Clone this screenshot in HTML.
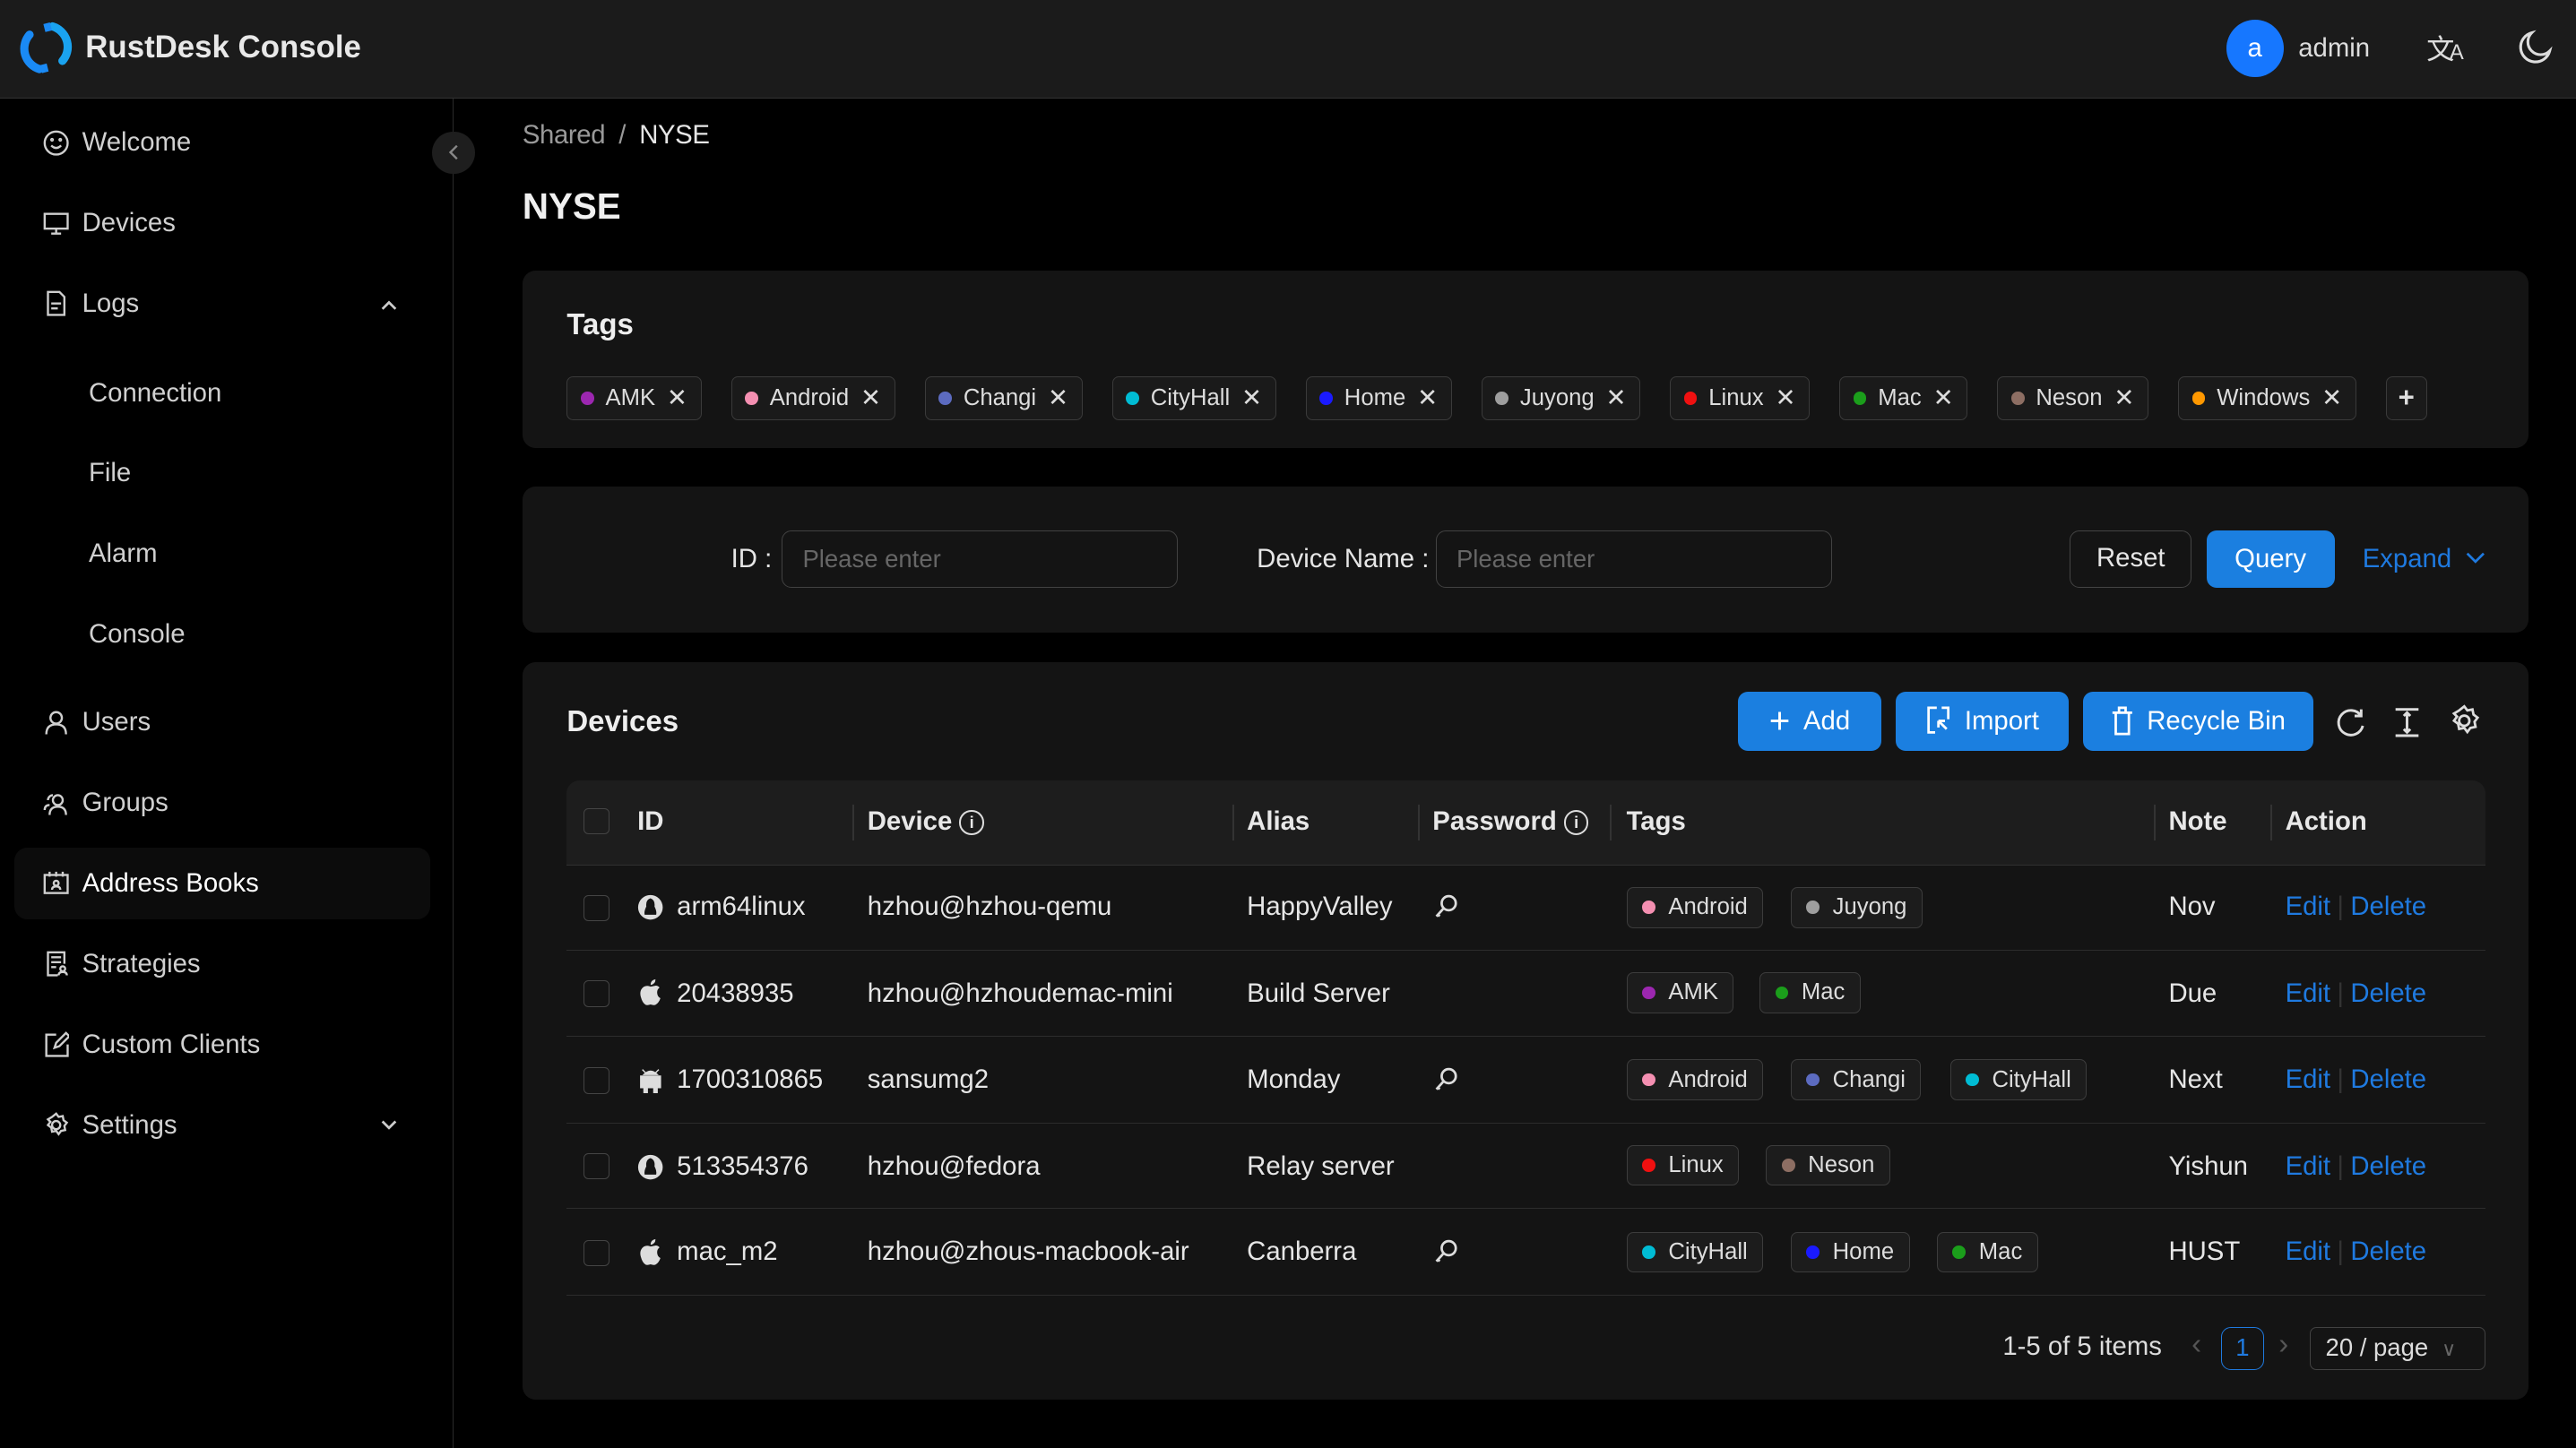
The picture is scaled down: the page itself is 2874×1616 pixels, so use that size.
<!DOCTYPE html>
<html><head><meta charset="utf-8"><style>
*{box-sizing:border-box;margin:0;padding:0}
html,body{width:2874px;height:1616px;overflow:hidden;background:#000}
#w{zoom:1.83291;width:1568px;height:882px;position:relative;font-family:"Liberation Sans",sans-serif;color:#e6e6e6;background:#000}
.a{position:absolute}
.hd{left:0;top:0;width:1568px;height:60px;background:#1b1b1b;border-bottom:1px solid #333}
.sb{left:0;top:60px;width:276px;height:822px;border-right:1px solid #2a2a2a}
.mi{position:absolute;left:26px;font-size:16px;color:#d0d0d0;display:flex;align-items:center;gap:8px;height:20px}
.mi svg{width:16px;height:16px;fill:none;stroke:#cfcfcf;stroke-width:1.3}
.sub{position:absolute;left:54px;font-size:16px;color:#d0d0d0}
.card{background:#141414;border-radius:8px}
.tag{display:inline-flex;align-items:center;height:27px;border:1px solid #3a3a3a;border-radius:4px;background:#1a1a1a;padding:0 8px;font-size:14px;color:#ddd;gap:7px}
.dot{width:8px;height:8px;border-radius:50%;display:inline-block}
.x{font-size:15px;margin-left:0}
.inp{border:1px solid #424242;border-radius:6px;height:35px;width:241px;font-size:15px;color:#666;padding:8px 12px;background:#141414}
.btn{background:#1b7fe0;border-radius:6px;color:#fff;font-size:16px;display:flex;align-items:center;justify-content:center;gap:8px}
.th{font-size:16px;font-weight:bold;color:#e8e8e8}
.sep{position:absolute;top:490px;width:1px;height:22px;background:#333}
.row{position:absolute;left:345px;width:1168px;height:52px;border-bottom:1px solid #2c2c2c}
.cb{position:absolute;left:355px;width:16px;height:16px;border:1px solid #444;border-radius:3px}
.t{position:absolute;font-size:16px;color:#e6e6e6;white-space:nowrap}
.lk{color:#1f7ae0}
.lk b{font-weight:normal;color:#333;margin:0 4px}
.stag{position:absolute;display:inline-flex;align-items:center;height:25px;border:1px solid #3c3c3c;border-radius:4px;background:#1c1c1c;padding:0 9px;font-size:14px;color:#ddd;gap:8px}
.key{position:absolute;left:872px;width:16px;height:16px}
</style></head><body><div id="w">
<div class="a hd"></div>
<svg class="a" style="left:12px;top:13px" width="33" height="32" viewBox="0 0 33 32"><path d="M20 3 A13 13 0 0 1 26 24" stroke="#1aa3f0" stroke-width="5" fill="none" stroke-linecap="round"/><path d="M12 29 A13 13 0 0 1 6 8" stroke="#1a8af5" stroke-width="5" fill="none" stroke-linecap="round"/><path d="M19 3 L15 4 M13 29 L17 28" stroke="#1a8af5" stroke-width="5"/></svg>
<div class="a" style="left:52px;top:18px;font-size:19px;font-weight:bold;color:#e8e8e8">RustDesk Console</div>
<div class="a" style="left:1355px;top:12px;width:35px;height:35px;border-radius:50%;background:#1677ff;color:#fff;font-size:16px;text-align:center;line-height:35px">a</div>
<div class="a" style="left:1399px;top:20px;font-size:16px;color:#ddd">admin</div>
<div class="a" style="left:1477px;top:17px;font-size:17px;color:#ddd;font-family:'Noto Sans CJK SC',sans-serif;line-height:24px">文<span style="font-size:13px;font-family:'Liberation Sans';margin-left:-3px">A</span></div>
<svg class="a" style="left:1532px;top:18px" width="22" height="22" viewBox="0 0 22 22"><path d="M9 2 A9 9 0 1 0 20 13 A7 7 0 0 1 9 2Z" fill="none" stroke="#ddd" stroke-width="1.7"/></svg>

<div class="a sb"></div>
<div class="mi" style="top:77px"><svg viewBox="0 0 16 16"><circle cx="8" cy="8" r="7"/><path d="M5 9.5q3 3 6 0"/><circle cx="5.5" cy="6" r=".5"/><circle cx="10.5" cy="6" r=".5"/></svg>Welcome</div>
<div class="mi" style="top:126px"><svg viewBox="0 0 16 16"><rect x="1" y="2" width="14" height="9"/><path d="M8 11v3M5 14h6"/></svg>Devices</div>
<div class="mi" style="top:175px"><svg viewBox="0 0 16 16"><path d="M3 1h7l3 3v11H3z M5 8h6M5 11h4"/></svg>Logs</div>
<svg class="a" style="left:231px;top:181px" width="12" height="10" viewBox="0 0 12 10"><path d="M2 7l4-4 4 4" stroke="#ccc" stroke-width="1.5" fill="none"/></svg>
<div class="sub" style="top:230px">Connection</div>
<div class="sub" style="top:279px">File</div>
<div class="sub" style="top:328px">Alarm</div>
<div class="sub" style="top:377px">Console</div>
<div class="mi" style="top:430px"><svg viewBox="0 0 16 16"><circle cx="8" cy="5" r="3.5"/><path d="M2 15q0-6 6-6t6 6"/></svg>Users</div>
<div class="mi" style="top:479px"><svg viewBox="0 0 16 16"><circle cx="9" cy="6" r="3"/><path d="M4 15q0-5 5-5t5 5M6 3a3 3 0 0 0-3 3M1 12q0-3 3-3"/></svg>Groups</div>
<div class="a" style="left:9px;top:516px;width:253px;height:44px;background:#0c0c0c;border-radius:8px"></div>
<div class="mi" style="top:528px;color:#fff"><svg viewBox="0 0 16 16"><rect x="1" y="3" width="14" height="11"/><path d="M4 1v3M8 1v3M12 1v3"/><circle cx="8" cy="8" r="1.5"/><path d="M5.5 12q0-2 2.5-2t2.5 2"/></svg>Address Books</div>
<div class="mi" style="top:577px"><svg viewBox="0 0 16 16"><path d="M13 8V1H3v14h6M5 4h6M5 7h6M5 10h3"/><circle cx="12" cy="11" r="1.5"/><path d="M9.5 15q0-2 2.5-2t2.5 2"/></svg>Strategies</div>
<div class="mi" style="top:626px"><svg viewBox="0 0 16 16"><path d="M8 2H2v13h13V8M7 10l1-3 6-6 2 2-6 6z"/></svg>Custom Clients</div>
<div class="mi" style="top:675px"><svg viewBox="0 0 16 16"><circle cx="8" cy="8" r="2.5"/><path d="M8 1l1.5 2 2.5-.5.5 2.5 2 1.5-1.5 2 .5 2.5-2.5.5-1.5 2-1.5-2-2.5.5-.5-2.5-2-1.5 1.5-2L3 4.5 5.5 3z"/></svg>Settings</div>
<svg class="a" style="left:231px;top:680px" width="12" height="10" viewBox="0 0 12 10"><path d="M2 3l4 4 4-4" stroke="#ccc" stroke-width="1.5" fill="none"/></svg>
<div class="a" style="left:263px;top:80px;width:26px;height:26px;border-radius:50%;background:#1e1e1e"></div>
<svg class="a" style="left:271px;top:87px" width="10" height="12" viewBox="0 0 10 12"><path d="M7 2L3 6l4 4" stroke="#888" stroke-width="1.3" fill="none"/></svg>

<div class="a" style="left:318px;top:73px;font-size:16px;color:#999;letter-spacing:-0.2px">Shared <span style="margin:0 4px">/</span> <span style="color:#e6e6e6">NYSE</span></div>
<div class="a" style="left:318px;top:113px;font-size:22px;font-weight:bold;color:#f0f0f0">NYSE</div>

<div class="a card" style="left:318px;top:165px;width:1221px;height:108px"></div>
<div class="a" style="left:345px;top:187px;font-size:18px;font-weight:bold;color:#eee">Tags</div>
<div class="a" style="left:345px;top:229px;display:flex;gap:18px">
<span class="tag"><i class="dot" style="background:#9c27b0"></i>AMK<span class="x">✕</span></span>
<span class="tag"><i class="dot" style="background:#f48fb1"></i>Android<span class="x">✕</span></span>
<span class="tag"><i class="dot" style="background:#5c6bc0"></i>Changi<span class="x">✕</span></span>
<span class="tag"><i class="dot" style="background:#00bcd4"></i>CityHall<span class="x">✕</span></span>
<span class="tag"><i class="dot" style="background:#1a1aff"></i>Home<span class="x">✕</span></span>
<span class="tag"><i class="dot" style="background:#9e9e9e"></i>Juyong<span class="x">✕</span></span>
<span class="tag"><i class="dot" style="background:#f01010"></i>Linux<span class="x">✕</span></span>
<span class="tag"><i class="dot" style="background:#1b9e1b"></i>Mac<span class="x">✕</span></span>
<span class="tag"><i class="dot" style="background:#8d6e63"></i>Neson<span class="x">✕</span></span>
<span class="tag"><i class="dot" style="background:#ff9800"></i>Windows<span class="x">✕</span></span>
<span class="tag" style="padding:0 7px;font-size:17px;font-weight:bold">+</span>
</div>

<div class="a card" style="left:318px;top:296px;width:1221px;height:89px"></div>
<div class="a" style="left:445px;top:331px;font-size:16px">ID :</div>
<div class="a inp" style="left:476px;top:323px">Please enter</div>
<div class="a" style="left:765px;top:331px;font-size:16px">Device Name :</div>
<div class="a inp" style="left:874px;top:323px">Please enter</div>
<div class="a" style="left:1260px;top:323px;width:74px;height:35px;border:1px solid #444;border-radius:6px;font-size:16px;text-align:center;line-height:33px">Reset</div>
<div class="a btn" style="left:1343px;top:323px;width:78px;height:35px">Query</div>
<div class="a lk" style="left:1438px;top:331px;font-size:16px">Expand <svg width="14" height="10" viewBox="0 0 14 10" style="margin-left:3px"><path d="M2 2l5 5 5-5" stroke="#1f7ae0" stroke-width="1.5" fill="none"/></svg></div>

<div class="a card" style="left:318px;top:403px;width:1221px;height:449px"></div>
<div class="a" style="left:345px;top:429px;font-size:18px;font-weight:bold;color:#eee">Devices</div>
<div class="a btn" style="left:1058px;top:421px;width:87px;height:36px"><span style="font-size:22px;font-weight:300">+</span>Add</div>
<div class="a btn" style="left:1154px;top:421px;width:105px;height:36px"><svg width="16" height="18" viewBox="0 0 16 18"><path d="M7 1H2v15h4M10 1h4v7M8 9l5 5M8 9v4M8 9h4" stroke="#fff" stroke-width="1.5" fill="none"/></svg>Import</div>
<div class="a btn" style="left:1268px;top:421px;width:140px;height:36px"><svg width="14" height="18" viewBox="0 0 14 18"><path d="M1 4h12M5 4V1h4v3M3 4v13h8V4" stroke="#fff" stroke-width="1.5" fill="none"/></svg>Recycle Bin</div>
<svg class="a" style="left:1421px;top:430px" width="20" height="20" viewBox="0 0 20 20"><path d="M16 6A7.5 7.5 0 1 0 17 12M16 2v4h-4" stroke="#ddd" stroke-width="1.6" fill="none"/></svg>
<svg class="a" style="left:1456px;top:430px" width="18" height="20" viewBox="0 0 18 20"><path d="M2 2h14M2 18h14M9 4v12M7 6l2-2 2 2M7 14l2 2 2-2" stroke="#ddd" stroke-width="1.6" fill="none"/></svg>
<svg class="a" style="left:1490px;top:429px" width="20" height="20" viewBox="0 0 16 16"><circle cx="8" cy="8" r="2.5" stroke="#ddd" fill="none" stroke-width="1.2"/><path d="M8 1l1.5 2 2.5-.5.5 2.5 2 1.5-1.5 2 .5 2.5-2.5.5-1.5 2-1.5-2-2.5.5-.5-2.5-2-1.5 1.5-2L3 4.5 5.5 3z" stroke="#ddd" fill="none" stroke-width="1.2"/></svg>

<div class="a" style="left:345px;top:475px;width:1168px;height:52px;background:#1d1d1d;border-radius:8px 8px 0 0;border-bottom:1px solid #303030"></div>
<div class="cb" style="top:492px"></div>
<div class="a th" style="left:388px;top:491px">ID</div>
<div class="a th" style="left:528px;top:491px">Device <span style="display:inline-block;width:15px;height:15px;border:1.3px solid #ddd;border-radius:50%;font-size:10px;text-align:center;line-height:13px;vertical-align:1px">i</span></div>
<div class="a th" style="left:759px;top:491px">Alias</div>
<div class="a th" style="left:872px;top:491px">Password <span style="display:inline-block;width:15px;height:15px;border:1.3px solid #ddd;border-radius:50%;font-size:10px;text-align:center;line-height:13px;vertical-align:1px">i</span></div>
<div class="a th" style="left:990px;top:491px">Tags</div>
<div class="a th" style="left:1320px;top:491px">Note</div>
<div class="a th" style="left:1391px;top:491px">Action</div>
<div class="sep" style="left:519px"></div><div class="sep" style="left:750px"></div><div class="sep" style="left:863px"></div><div class="sep" style="left:980px"></div><div class="sep" style="left:1311px"></div><div class="sep" style="left:1382px"></div>

<div class="row" style="top:527px"></div><div class="row" style="top:579px"></div><div class="row" style="top:632px"></div><div class="row" style="top:684px"></div><div class="row" style="top:737px"></div>

<div class="cb" style="top:545px"></div><div class="cb" style="top:597px"></div><div class="cb" style="top:650px"></div><div class="cb" style="top:702px"></div><div class="cb" style="top:755px"></div>

<svg class="a" style="left:388px;top:544px" width="16" height="17" viewBox="0 0 16 17"><circle cx="8" cy="8.5" r="7.5" fill="#ddd"/><path d="M8 3q-3 1-2.5 5-1.5 3-1 5h7q.5-2-1-5 .5-4-2.5-5z" fill="#141414"/></svg>
<div class="t" style="left:412px;top:543px">arm64linux</div><div class="t" style="left:528px;top:543px">hzhou@hzhou-qemu</div><div class="t" style="left:759px;top:543px">HappyValley</div>
<svg class="key" style="top:544px" viewBox="0 0 16 16"><circle cx="10" cy="6" r="4.3" stroke="#ddd" stroke-width="1.5" fill="none"/><path d="M7 9l-4.5 5M3 12.5l1.5 1.5" stroke="#ddd" stroke-width="1.5" fill="none"/></svg>
<div class="stag" style="left:990px;top:540px"><i class="dot" style="background:#f48fb1"></i>Android</div>
<div class="stag" style="left:1090px;top:540px"><i class="dot" style="background:#9e9e9e"></i>Juyong</div>
<div class="t" style="left:1320px;top:543px">Nov</div>

<svg class="a" style="left:389px;top:596px" width="14" height="17" viewBox="0 0 14 17"><path d="M7 5q-2-1-4 0-3 2-2 6 1 4 3 5 1 .5 3-.2 2 .7 3 .2 2-1 3-4-2-1-2-3.5 0-2 1.5-3-1.5-1.5-3-1-1.5.3-2.5.5z M7 4q0-3 3-3.5 0 3-3 3.5z" fill="#ddd"/></svg>
<div class="t" style="left:412px;top:596px">20438935</div><div class="t" style="left:528px;top:596px">hzhou@hzhoudemac-mini</div><div class="t" style="left:759px;top:596px">Build Server</div>
<div class="stag" style="left:990px;top:592px"><i class="dot" style="background:#9c27b0"></i>AMK</div>
<div class="stag" style="left:1071px;top:592px"><i class="dot" style="background:#1b9e1b"></i>Mac</div>
<div class="t" style="left:1320px;top:596px">Due</div>

<svg class="a" style="left:389px;top:649px" width="14" height="17" viewBox="0 0 14 17"><path d="M3 5q4-4 8 0z M1 6h12v7H1z M3 13h2v3H3z M9 13h2v3H9z M2 2l2 2M12 2l-2 2" fill="#ddd" stroke="#ddd" stroke-width=".8"/></svg>
<div class="t" style="left:412px;top:648px">1700310865</div><div class="t" style="left:528px;top:648px">sansumg2</div><div class="t" style="left:759px;top:648px">Monday</div>
<svg class="key" style="top:649px" viewBox="0 0 16 16"><circle cx="10" cy="6" r="4.3" stroke="#ddd" stroke-width="1.5" fill="none"/><path d="M7 9l-4.5 5M3 12.5l1.5 1.5" stroke="#ddd" stroke-width="1.5" fill="none"/></svg>
<div class="stag" style="left:990px;top:645px"><i class="dot" style="background:#f48fb1"></i>Android</div>
<div class="stag" style="left:1090px;top:645px"><i class="dot" style="background:#5c6bc0"></i>Changi</div>
<div class="stag" style="left:1187px;top:645px"><i class="dot" style="background:#00bcd4"></i>CityHall</div>
<div class="t" style="left:1320px;top:648px">Next</div>

<svg class="a" style="left:388px;top:702px" width="16" height="17" viewBox="0 0 16 17"><circle cx="8" cy="8.5" r="7.5" fill="#ddd"/><path d="M8 3q-3 1-2.5 5-1.5 3-1 5h7q.5-2-1-5 .5-4-2.5-5z" fill="#141414"/></svg>
<div class="t" style="left:412px;top:701px">513354376</div><div class="t" style="left:528px;top:701px">hzhou@fedora</div><div class="t" style="left:759px;top:701px">Relay server</div>
<div class="stag" style="left:990px;top:697px"><i class="dot" style="background:#f01010"></i>Linux</div>
<div class="stag" style="left:1075px;top:697px"><i class="dot" style="background:#8d6e63"></i>Neson</div>
<div class="t" style="left:1320px;top:701px">Yishun</div>

<svg class="a" style="left:389px;top:754px" width="14" height="17" viewBox="0 0 14 17"><path d="M7 5q-2-1-4 0-3 2-2 6 1 4 3 5 1 .5 3-.2 2 .7 3 .2 2-1 3-4-2-1-2-3.5 0-2 1.5-3-1.5-1.5-3-1-1.5.3-2.5.5z M7 4q0-3 3-3.5 0 3-3 3.5z" fill="#ddd"/></svg>
<div class="t" style="left:412px;top:753px">mac_m2</div><div class="t" style="left:528px;top:753px">hzhou@zhous-macbook-air</div><div class="t" style="left:759px;top:753px">Canberra</div>
<svg class="key" style="top:754px" viewBox="0 0 16 16"><circle cx="10" cy="6" r="4.3" stroke="#ddd" stroke-width="1.5" fill="none"/><path d="M7 9l-4.5 5M3 12.5l1.5 1.5" stroke="#ddd" stroke-width="1.5" fill="none"/></svg>
<div class="stag" style="left:990px;top:750px"><i class="dot" style="background:#00bcd4"></i>CityHall</div>
<div class="stag" style="left:1090px;top:750px"><i class="dot" style="background:#1a1aff"></i>Home</div>
<div class="stag" style="left:1179px;top:750px"><i class="dot" style="background:#1b9e1b"></i>Mac</div>
<div class="t" style="left:1320px;top:753px">HUST</div>

<div class="t lk" style="left:1391px;top:543px">Edit<b>|</b>Delete</div>
<div class="t lk" style="left:1391px;top:596px">Edit<b>|</b>Delete</div>
<div class="t lk" style="left:1391px;top:648px">Edit<b>|</b>Delete</div>
<div class="t lk" style="left:1391px;top:701px">Edit<b>|</b>Delete</div>
<div class="t lk" style="left:1391px;top:753px">Edit<b>|</b>Delete</div>

<div class="t" style="left:1219px;top:811px;color:#ddd">1-5 of 5 items</div>
<div class="t" style="left:1334px;top:808px;color:#555;font-size:18px">‹</div>
<div class="a" style="left:1352px;top:808px;width:26px;height:26px;border:1px solid #1f7ae0;border-radius:6px;color:#1f7ae0;font-size:15px;text-align:center;line-height:24px">1</div>
<div class="t" style="left:1387px;top:808px;color:#555;font-size:18px">›</div>
<div class="a" style="left:1406px;top:808px;width:107px;height:26px;border:1px solid #424242;border-radius:4px;font-size:15px;color:#ddd;padding-left:9px;line-height:24px">20 / page <span style="color:#666;font-size:12px;margin-left:4px">∨</span></div>
</div></body></html>
